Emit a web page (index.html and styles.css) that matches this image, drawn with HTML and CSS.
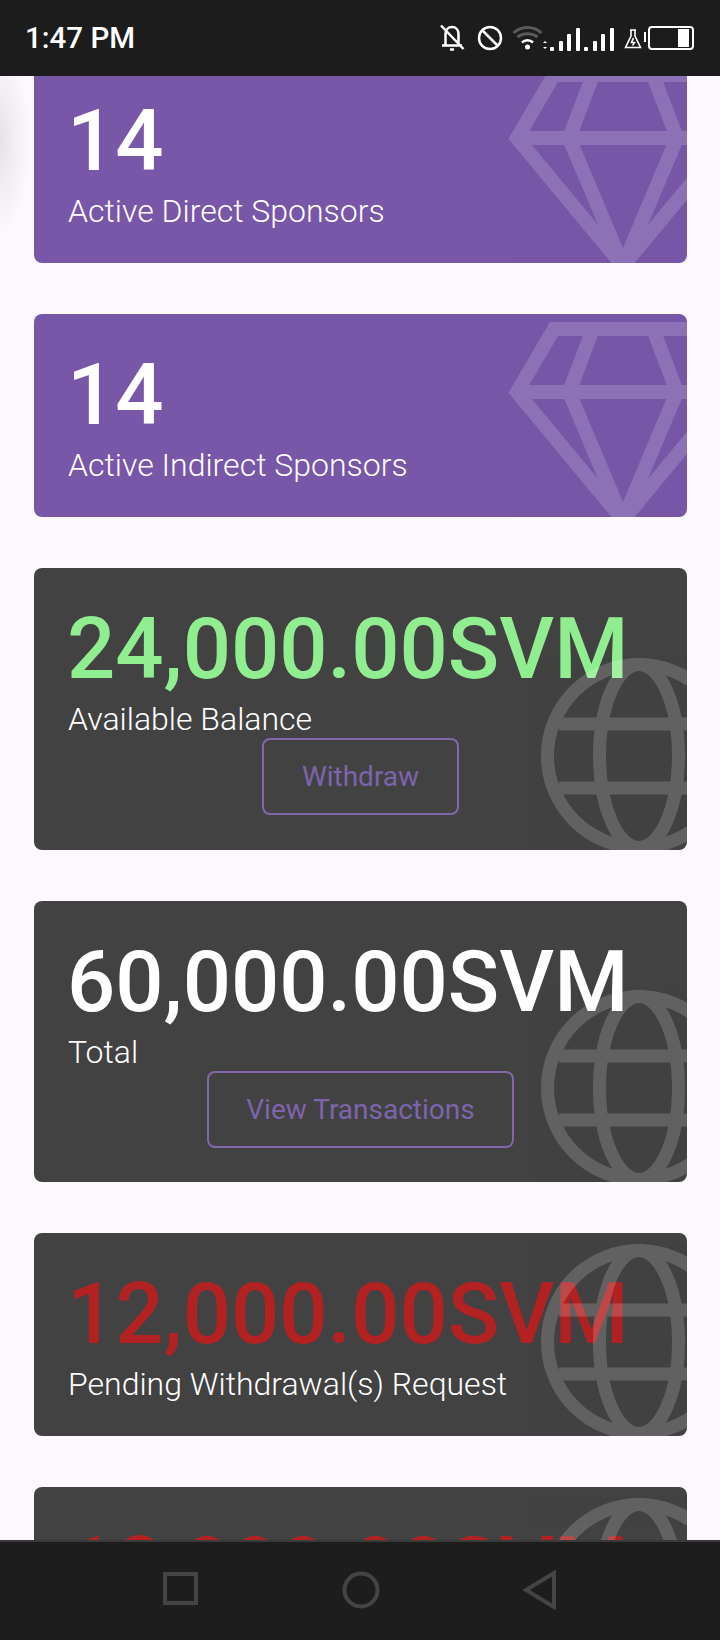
FILE: index.html
```html
<!doctype html>
<html>
<head>
<meta charset="UTF-8">
<title>Dashboard</title>
<link rel="stylesheet" href="styles.css">
</head>

<body>
  <svg class="defs" width="0" height="0">
    <symbol id="gem" viewBox="0 0 230 200">
      <path d="M47 7 H185 L222 70 L116 198 L10 70 Z M10 70 H222 M86 7 L62 70 L116 198 L170 70 L146 7" />
    </symbol>
    <symbol id="globe" viewBox="0 0 200 200">
      <circle cx="100" cy="100" r="91.5" />
      <ellipse cx="100" cy="100" rx="39.5" ry="91.5" />
      <path d="M20 68 H180 M20 132 H180" />
    </symbol>
  </svg>

  <div class="status">
    <span class="time">1:47 PM</span>
    <div class="status-icons">
      <svg class="ico-bell" width="26" height="28" viewBox="0 0 26 28">
        <path d="M6.500 21 V10 C6.500 6 9 3 13 3 C17 3 19.500 6 19.500 10 V21 M3 21.500 H23 M2 1.500 L24.500 25" />
        <path d="M11 25.500 H15" />
      </svg>
      <svg class="ico-ban" width="26" height="26" viewBox="0 0 26 26">
        <circle cx="13" cy="13" r="11" />
        <path d="M5.500 5.500 L20.500 20.500" />
      </svg>
      <svg class="ico-wifi" width="36" height="26" viewBox="0 0 36 26">
        <path class="dim" d="M1.500 8 C9 0.500 22 0.500 29.500 8 M5.500 12 C11 7.500 20 7.500 25.500 12" />
        <path d="M10 17.500 C13 14.500 18 14.500 21 17.500" />
        <circle class="dot" cx="15.500" cy="22" r="2.500" />
        <path class="arrows" d="M33 16 L35 18 H31 Z M33 24 L35 22 H31 Z" />
      </svg>
      <div class="signal">
        <i class="b1"></i><i class="b2"></i><i class="b3"></i><i class="b4"></i>
      </div>
      <div class="signal">
        <i class="b1"></i><i class="b2"></i><i class="b3"></i><i class="b4"></i>
      </div>
      <svg class="ico-flask" width="18" height="20" viewBox="0 0 18 20">
        <path d="M6 1 H12 M7 1 V7 L1.500 18.500 H16.500 L11 7 V1" />
        <path d="M9.500 9 L7.500 13.500 H10.500 L8.500 16.500" />
      </svg>
      <div class="battery"><span class="charge"></span></div>
    </div>
  </div>

  <div class="scroll">
    <div class="glow"></div>
    <div class="list">
      <div class="card purple">
        <div class="num">14</div>
        <div class="label">Active Direct Sponsors</div>
        <svg class="gem"><use href="#gem" /></svg>
      </div>
      <div class="card purple">
        <div class="num">14</div>
        <div class="label">Active Indirect Sponsors</div>
        <svg class="gem"><use href="#gem" /></svg>
      </div>
      <div class="card dark tall">
        <div class="num green">24,000.00SVM</div>
        <div class="label">Available Balance</div>
        <a class="btn btn-withdraw" href="#">Withdraw</a>
        <svg class="globe"><use href="#globe" /></svg>
      </div>
      <div class="card dark tall">
        <div class="num">60,000.00SVM</div>
        <div class="label">Total</div>
        <a class="btn btn-trans" href="#">View Transactions</a>
        <svg class="globe"><use href="#globe" /></svg>
      </div>
      <div class="card dark">
        <div class="num red">12,000.00SVM</div>
        <div class="label">Pending Withdrawal(s) Request</div>
        <svg class="globe"><use href="#globe" /></svg>
      </div>
      <div class="card dark">
        <div class="num red">12,000.00SVM</div>
        <svg class="globe"><use href="#globe" /></svg>
      </div>
    </div>
  </div>

  <div class="navbar">
    <svg width="36" height="36" viewBox="0 0 36 36"><rect x="2" y="2" width="31" height="29" /></svg>
    <svg width="40" height="40" viewBox="0 0 40 40"><circle cx="20" cy="20" r="16.500" /></svg>
    <svg width="36" height="40" viewBox="0 0 36 40"><path d="M31 3 V37 L3 20 Z" /></svg>
  </div>
</body>
</html>
```

FILE: styles.css
```css
html, body {
  margin: 0;
  height: 100%;
}
body {
  display: flex;
  flex-direction: column;
  height: 1640px;
  overflow: hidden;
  background-color: #fdf8fe;
  font-family: Roboto, sans-serif;
}
.defs {
  position: absolute;
}

/* status bar */
.status {
  height: 76px;
  flex: none;
  display: flex;
  align-items: center;
  justify-content: space-between;
  padding: 0 26px 0 25px;
  background-color: #1c1c1c;
  color: #fff;
  position: relative;
  z-index: 2;
}
.time {
  font-size: 29.500px;
  font-weight: 500;
}
.status-icons {
  display: flex;
  align-items: center;
  height: 30px;
}
.status-icons svg {
  fill: none;
  stroke: #fff;
  stroke-width: 2.500;
}
.ico-bell {
  margin-right: 12px;
}
.ico-ban {
  margin-right: 9px;
}
.ico-wifi {
  margin-right: 2px;
}
.ico-wifi .dim {
  stroke: #5a5a5a;
  stroke-width: 3;
}
.ico-wifi .dot,
.ico-wifi .arrows {
  fill: #fff;
  stroke: none;
}
.signal {
  display: flex;
  align-items: flex-end;
  gap: 4.500px;
  height: 24px;
  margin: 0 4.500px 0 0;
  padding-top: 2px;
}
.signal i {
  width: 4px;
  background-color: #fff;
  border-radius: 1px;
}
.signal .b1 { height: 4px; }
.signal .b2 { height: 10px; }
.signal .b3 { height: 17px; }
.signal .b4 { height: 23px; }
.status-icons .ico-flask {
  stroke-width: 1.600;
  margin: 2px 6px 0 6px;
}
.battery {
  width: 36px;
  height: 18px;
  border: 2px solid #fff;
  border-radius: 4px;
  padding: 1px 3px;
  display: flex;
  justify-content: flex-end;
  position: relative;
}
.battery:before {
  content: '';
  position: absolute;
  left: -6px;
  top: 4px;
  width: 2px;
  height: 10px;
  background-color: #fff;
}
.charge {
  width: 11px;
  background-color: #fff;
}

/* cards */
.scroll {
  flex: 1;
  overflow: hidden;
  position: relative;
}
.glow {
  position: absolute;
  left: -30px;
  top: -30px;
  width: 60px;
  height: 190px;
  background: radial-gradient(ellipse closest-side, #e6e3e7, rgba(230, 227, 231, 0));
}
.list {
  position: relative;
  margin-top: -16px;
  padding: 0 33px 0 34px;
  display: flex;
  flex-direction: column;
  gap: 51px;
}
.card {
  position: relative;
  overflow: hidden;
  flex: none;
  height: 203px;
  box-sizing: border-box;
  padding: 32px 34px 0;
  border-radius: 8px;
  color: #fff;
}
.tall {
  height: 281.500px;
}
.purple {
  background-color: #7856a8;
}
.dark {
  background-color: #424242;
}
.num {
  font-size: 85px;
  font-weight: 500;
  line-height: 99px;
  margin-left: -1px;
  white-space: nowrap;
}
.green {
  color: #90ee90;
}
.red {
  color: #b32222;
}
.label {
  font-size: 32px;
  font-weight: 300;
  line-height: 40px;
}
.btn {
  display: block;
  box-sizing: border-box;
  height: 77px;
  margin: -1px auto 0;
  border: 2px solid #8367a8;
  border-radius: 8px;
  color: #7d64ad;
  font-size: 28px;
  line-height: 73px;
  text-align: center;
  text-decoration: none;
}
.btn-withdraw {
  width: 197px;
}
.btn-trans {
  width: 307px;
}

/* watermark icons */
.gem,
.globe {
  position: absolute;
  fill: none;
}
.gem {
  width: 230px;
  height: 200px;
  left: 473px;
  bottom: -5px;
  stroke: #fff;
  stroke-width: 14;
  stroke-linejoin: miter;
  opacity: 0.16;
}
.globe {
  width: 200px;
  height: 200px;
  right: -52px;
  bottom: -6px;
  stroke: #fff;
  stroke-width: 13;
  opacity: 0.17;
}

/* android nav */
.navbar {
  height: 100px;
  flex: none;
  display: flex;
  align-items: center;
  justify-content: space-between;
  box-sizing: border-box;
  padding: 0 161px 2px 163px;
  background-color: #1d1d1d;
  border-top: 2px solid #3a3a3a;
  position: relative;
  z-index: 2;
}
.navbar svg {
  fill: none;
  stroke: #444;
  stroke-width: 4;
}
```
